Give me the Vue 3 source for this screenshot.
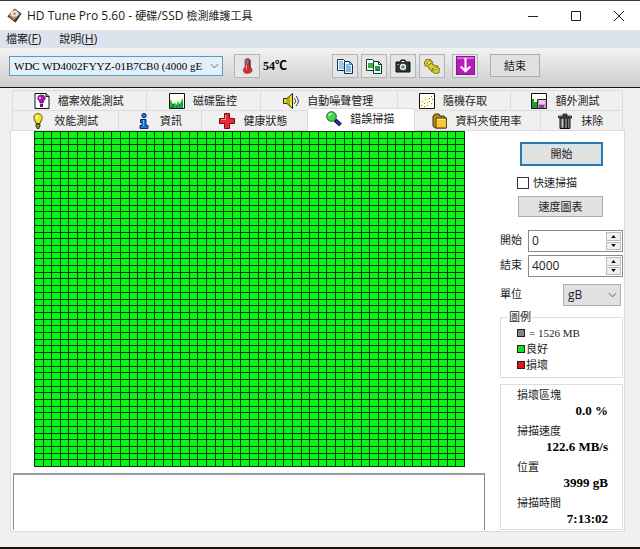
<script setup>
import { ref } from 'vue'

const COUNT = 50
const MAP_W = 430
const MAP_H = 335

function gridPath() {
  let d = ''
  for (let i = 0; i <= COUNT; i++) {
    const x = Math.round((i * MAP_W) / COUNT)
    const y = Math.round((i * MAP_H) / COUNT)
    d += `M${x} 0h1v${MAP_H + 1}h-1z`
    d += `M0 ${y}h${MAP_W + 1}v1h-${MAP_W + 1}z`
  }
  return d
}
const lines = gridPath()

const upperTabs = [
  { icon: 'file', label: '檔案效能測試', weight: 135 },
  { icon: 'monitor', label: '磁碟監控', weight: 114 },
  { icon: 'speaker', label: '自動噪聲管理', weight: 137 },
  { icon: 'random', label: '隨機存取', weight: 113 },
  { icon: 'extra', label: '額外測試', weight: 112 },
]
const lowerTabs = [
  { icon: 'bulb', label: '效能測試', weight: 106 },
  { icon: 'info', label: '資訊', weight: 83 },
  { icon: 'cross', label: '健康狀態', weight: 106 },
  { icon: 'lens', label: '錯誤掃描', weight: 108, active: true },
  { icon: 'folder', label: '資料夾使用率', weight: 126 },
  { icon: 'trash', label: '抹除', weight: 82 },
]
const tabRows = [upperTabs, lowerTabs]

const icons = {
  file: '<path d="M1 .5h11l3 3v12H1z" fill="#fff" stroke="#111"/><path d="M12 .5v3h3" fill="none" stroke="#111"/><path d="M7.500 2c-4.500 0-4.500 4.500-2 6l.5 2h3l.5-2c2.500-1.500 2.500-6-2-6z" fill="#b012b8" stroke="#50105a" stroke-width=".8"/><path d="M6 11h3v3H6z" fill="#701078"/><path d="M5 4h2v2H5z" fill="#f0a0f4"/>',
  monitor: '<path d="M.5.5h15v15H.5z" fill="#fffff0" stroke="#111"/><path d="M1 15V9l1-3 1 4 2 1 1-2 1 3 1-1 1-4 1 4 2-2 1-4 1 3v7z" fill="#18b828"/><path d="M3 15v-4h2v4zM7 15v-3h1v3zM10 15v-4h1v4zM13 15v-5h1v5z" fill="#1866a0"/>',
  speaker: '<path d="M.5 5.500H4L9.500.5v15L4 10.500H.5z" fill="#f0df25" stroke="#222"/><path d="M4 5v6M6 4v8" stroke="#8b7810"/><path d="M11 5c2 2 2 4 0 6M13 3c3 3 3 7 0 10" fill="none" stroke="#333"/>',
  random: '<path d="M.5.5h15v15H.5z" fill="#fffff0" stroke="#111"/><path d="M2 12h1v1H2zM3 8h1v1H3zM5 10h1v1H5zM6 6h1v1H6zM8 9h1v1H8zM8 12h1v1H8zM10 5h1v1h-1zM10 8h1v1h-1zM12 3h1v1h-1zM13 6h1v1h-1zM12 10h1v1h-1zM5 13h1v1H5z" fill="#a37b12"/>',
  extra: '<path d="M.5.5h15v15H.5z" fill="#fffff0" stroke="#111"/><path d="M1 6h2v3h3v6H1z" fill="#18a030"/><path d="M6.500 6.500h9v9h-9z" fill="#d98fca" stroke="#222"/><path d="M8 7h6v4H8z" fill="#e8c9e5"/><path d="M8 12h5v3H8z" fill="#814a7d"/>',
  bulb: '<path d="M8 .7C3.500.7 3 5 5 8l1 2.500h4L11 8C13 5 12.500.7 8 .7z" fill="#f3e526" stroke="#56500a"/><path d="M6 3h2v3H6z" fill="#fffcc0"/><path d="M6 11h4v2l-1 2.500H7L6 13z" fill="#92922c" stroke="#222" stroke-width=".8"/>',
  info: '<circle cx="8" cy="2.600" r="2.200" fill="#2675d3" stroke="#082b70"/><path d="M4.500 6.500h5.500v6h2v3H4v-3h2v-3H4.500z" fill="#2375d0" stroke="#082b70"/><path d="M7 7h1v6H7z" fill="#70b5ff"/>',
  cross: '<path d="M5.500.5h5v5h5v5h-5v5h-5v-5h-5v-5h5z" fill="#e52c30" stroke="#751014"/><path d="M6 2h1v5H2V6h4z" fill="#ff8c88"/>',
  lens: '<path d="M9 9l5.500 5" stroke="#101060" stroke-width="4"/><path d="M10 10l4 3.500" stroke="#2548c8" stroke-width="1.500"/><circle cx="5.500" cy="5.500" r="4.800" fill="#45d845" stroke="#145e24"/><path d="M3 5c0-2 2-3 3-2" fill="none" stroke="#caffc5" stroke-width="1.500"/>',
  folder: '<path d="M1 3l2-2h4l1 2h4l2 2v10H3l-2-2z" fill="#b88a16" stroke="#423108"/><path d="M4 5h10.500v10H4z" fill="#f4c832" stroke="#57410c"/><path d="M5 6h8v1H5z" fill="#fff08b"/>',
  trash: '<path d="M1.500 3h13v2h-13zM6 1h4v2H6z" fill="#777" stroke="#111" stroke-width=".8"/><path d="M3 5h10v10.500H3z" fill="#777" stroke="#111"/><path d="M5 6h1v8H5z" fill="#ccc"/><path d="M7.500 6v9M10.500 6v9" stroke="#222"/>',
  copy: '<path d="M.5 1.500h6l2 2v9h-8z" fill="#fff" stroke="#143656"/><path d="M2 4h4M2 6h5M2 8h5M2 10h5" stroke="#3b94d5"/><path d="M7.500 3.500h5l3 3v9h-8z" fill="#e9f7ff" stroke="#142d50"/><path d="M12.500 3.500v3h3M9 7h3M9 9h5M9 11h5M9 13h5" fill="none" stroke="#267bc4"/>',
  copyImage: '<path d="M.5 1.500h6l2 2v9h-8z" fill="#fff" stroke="#173f26"/><path d="M2 5h5v5H2z" fill="#36b638"/><path d="M7.500 3.500h5l3 3v9h-8z" fill="#f2fff2" stroke="#12312c"/><path d="M12.500 3.500v3h3" fill="none" stroke="#12312c"/><path d="M9 8h5v5H9z" fill="#28a92c"/><path d="M10 11h4v2h-4z" fill="#1769a0"/>',
  camera: '<path d="M5 4l1-2h4l1 2h4v10H1V4z" fill="#273535" stroke="#111" stroke-linejoin="round"/><path d="M6.500 3h3v1h-3z" fill="#eee"/><circle cx="8" cy="9" r="3.200" fill="#e8eeee"/><circle cx="8" cy="9" r="1.700" fill="#6b7b7b"/><path d="M2 6h2v1H2z" fill="#8c9d9d"/>',
  gears: '<path d="M1 3l2-2 1 1 2-1 1 2 2 1-1 2 1 1 2 0 1 1 2 0 0 2 2 1-1 2 0 2-2 0-2 1-1-2-2 0-1-2-2-1 0-2-2-1-2 0 0-2-1-1 1-1z" fill="#dccf36" stroke="#80750f"/><path d="M3 6c0-2 2-3 4-3M8 13c0-3 2-4 5-4M4 7l4-2M9 12l4-1" fill="none" stroke="#80750f"/><circle cx="5" cy="4.500" r="1" fill="#fff9a0"/><circle cx="11" cy="10.500" r="1" fill="#fff9a0"/>',
  thermo: '<path d="M6 2.500c0-3 5-3 5 0V9c2.500 3 1 6.500-3 6.500s-5-4-2-6.500z" fill="#d7292d" stroke="#8a6868"/><path d="M7 1.500h2V6H7z" fill="#5f8585"/><path d="M7 7h1v5H7z" fill="#ff8980"/><path d="M11 2v7c3 2 2 5 0 6" fill="none" stroke="#521a20"/>',
  save: '<path d="M0 0h18v18H0z" fill="#b61abd" stroke="#60106a"/><path d="M1 1h16v2H1z" fill="#da6bdd"/><path d="M9 2v12M4.500 10L9 14.500 13.500 10" fill="none" stroke="#fff" stroke-width="2"/>',
}

const tools = [
  { icon: 'copy', label: '複製文字' },
  { icon: 'copyImage', label: '複製圖片' },
  { icon: 'camera', label: '螢幕擷圖' },
  { icon: 'gears', label: '選項' },
]

const stats = [
  { label: '損壞區塊', value: '0.0 %' },
  { label: '掃描速度', value: '122.6 MB/s' },
  { label: '位置', value: '3999 gB' },
  { label: '掃描時間', value: '7:13:02' },
]

const range = ref([
  { id: 'range-start', label: '開始', value: 0 },
  { id: 'range-end', label: '結束', value: 4000 },
])
const quick = ref(false)
</script>

<template>
  <main class="window">
    <header class="titlebar">
      <svg class="app-icon" viewBox="0 0 16 16" aria-hidden="true">
        <path d="M1 9L8 1l7 5-6 9z" fill="#4e4036" stroke="#292420" />
        <path d="M2 8l6-7 6 5-6 6z" fill="#bda183" />
        <ellipse cx="8" cy="6" rx="4" ry="3" fill="#f0ded0" />
        <circle cx="8" cy="6" r="1" fill="#735442" />
        <path d="M2 10l6 3" stroke="#e58a3c" />
      </svg>
      <h1>HD Tune Pro 5.60 - <span>硬碟</span>/SSD <span>檢測維護工具</span></h1>
      <div class="window-controls">
        <button aria-label="最小化"><svg viewBox="0 0 12 12"><path d="M1 6.500h10" /></svg></button>
        <button aria-label="最大化"><svg viewBox="0 0 12 12"><path d="M1.500 1.500h9v9h-9z" /></svg></button>
        <button aria-label="關閉"><svg viewBox="0 0 12 12"><path d="M1 1l10 10M11 1L1 11" /></svg></button>
      </div>
    </header>

    <nav class="menubar">
      <a href="#file"><span>檔案</span>(<u>F</u>)</a>
      <a href="#help"><span>說明</span>(<u>H</u>)</a>
    </nav>

    <section class="toolbar">
      <div class="picker drive">
        <select aria-label="磁碟機">
          <option>WDC WD4002FYYZ-01B7CB0 (4000 gE</option>
        </select>
        <svg class="chevron" viewBox="0 0 10 6"><path d="M1 1l4 4 4-4" /></svg>
      </div>
      <button class="tool" aria-label="溫度"><svg viewBox="0 0 16 16" v-html="icons.thermo" /></button>
      <output class="temperature">54℃</output>
      <div class="tool-group">
        <button v-for="t in tools" :key="t.icon" class="tool" :aria-label="t.label">
          <svg viewBox="0 0 16 16" v-html="icons[t.icon]" />
        </button>
      </div>
      <button class="tool save" aria-label="儲存"><svg viewBox="0 0 18 18" v-html="icons.save" /></button>
      <button class="exit">結束</button>
    </section>

    <section class="content">
      <div class="tabs" role="tablist">
        <div v-for="(row, i) in tabRows" :key="i" class="tab-row">
          <button
            v-for="tab in row"
            :key="tab.label"
            class="tab"
            :class="{ active: tab.active }"
            :style="{ flexGrow: tab.weight }"
            role="tab"
            :aria-selected="!!tab.active"
          >
            <svg viewBox="0 0 16 16" v-html="icons[tab.icon]" />
            <span>{{ tab.label }}</span>
          </button>
        </div>
      </div>

      <div class="page">
        <div class="scan">
          <svg class="map" viewBox="0 0 431 336" shape-rendering="crispEdges" role="img">
            <rect width="431" height="336" fill="#0bf516" />
            <path :d="lines" fill="#033806" />
          </svg>
          <div class="log"></div>
        </div>

        <aside class="side">
          <button class="start">開始</button>
          <label class="check"><input v-model="quick" type="checkbox" /><span>快速掃描</span></label>
          <button class="chart">速度圖表</button>

          <div v-for="r in range" :key="r.id" class="field">
            <label :for="r.id">{{ r.label }}</label>
            <div class="spin">
              <input :id="r.id" v-model.number="r.value" type="text" />
              <div class="arrows">
                <button aria-label="增加" @click="r.value++"><svg viewBox="0 0 6 4"><path d="M0 4l3-4 3 4z" /></svg></button>
                <button aria-label="減少" @click="r.value--"><svg viewBox="0 0 6 4"><path d="M0 0h6L3 4z" /></svg></button>
              </div>
            </div>
          </div>
          <div class="field unit">
            <label for="unit">單位</label>
            <div class="picker">
              <select id="unit"><option>gB</option></select>
              <svg class="chevron" viewBox="0 0 10 6"><path d="M1 1l4 4 4-4" /></svg>
            </div>
          </div>

          <fieldset class="legend">
            <legend>圖例</legend>
            <p class="block"><i class="swatch grey"></i><span>= 1526 MB</span></p>
            <p><i class="swatch green"></i><span>良好</span></p>
            <p><i class="swatch red"></i><span>損壞</span></p>
          </fieldset>

          <dl class="stats">
            <div v-for="s in stats" :key="s.label">
              <dt>{{ s.label }}</dt>
              <dd>{{ s.value }}</dd>
            </div>
          </dl>
        </aside>
      </div>
    </section>
  </main>
</template>

<style>
body {
  background: #f0f0f0;
}
</style>

<style scoped>
* {
  box-sizing: border-box;
}
.window {
  display: flex;
  flex-direction: column;
  min-height: 100vh;
  border-top: 1px solid #3a3638;
  border-bottom: 2px solid #17100f;
  background: #f0f0f0;
  color: #1c1c1c;
  font: 11px/16px "Open Sans", "Noto Sans CJK TC", sans-serif;
}
button,
input,
select {
  margin: 0;
  padding: 0;
  border-radius: 0;
  color: inherit;
  font: inherit;
}
svg {
  display: block;
}
.titlebar {
  display: flex;
  align-items: center;
  height: 29px;
  padding-left: 7px;
  background: #fff;
}
.app-icon {
  width: 15px;
  height: 15px;
}
h1 {
  flex: 1;
  margin: 0 0 0 5px;
  font-size: 12px;
  font-weight: 400;
  white-space: nowrap;
}
h1 span,
.menubar span {
  font-size: 11px;
}
.window-controls {
  display: flex;
}
.window-controls button {
  display: grid;
  place-items: center;
  width: 43px;
  height: 28px;
  border: 0;
  background: none;
}
.window-controls svg {
  width: 12px;
  height: 12px;
  fill: none;
  stroke: #222;
}
.menubar {
  display: flex;
  gap: 18px;
  height: 18px;
  padding: 0 6px;
  background: #dce3ed;
  font-size: 12px;
  line-height: 18px;
}
.menubar a {
  color: inherit;
  text-decoration: none;
}
.toolbar {
  display: flex;
  align-items: center;
  height: 40px;
  padding: 0 9px 4px;
  border-bottom: 1px solid #151515;
  background: linear-gradient(#f2f2f2, #cecece);
}
.picker {
  position: relative;
}
.picker select {
  width: 100%;
  height: 22px;
  padding: 0 18px 0 4px;
  border: 1px solid #adadad;
  background: #e1e1e1;
  font-size: 12px;
  appearance: none;
}
.drive {
  width: 214px;
}
.drive select {
  height: 20px;
  padding-right: 12px;
  border: 1px solid #5a9bc4;
  background: #e3f0fa;
  color: #000;
  font-family: "Liberation Serif", serif;
  font-size: 11px;
}
.chevron {
  position: absolute;
  top: 50%;
  right: 4px;
  width: 9px;
  height: 6px;
  margin-top: -3px;
  fill: none;
  stroke: #555;
  pointer-events: none;
}
.tool {
  display: grid;
  place-items: center;
  width: 26px;
  height: 24px;
  border: 1px solid #b4b4b4;
  background: #e6e6e6;
}
.tool svg {
  width: 16px;
  height: 16px;
}
.drive + .tool {
  margin-left: 11px;
}
.temperature {
  width: 69px;
  margin-left: 3px;
  color: #000;
  font: bold 12px/16px "Liberation Serif", "Noto Sans CJK TC", serif;
}
.tool-group {
  display: flex;
  gap: 3px;
}
.save {
  margin-left: 7px;
}
.save svg {
  width: 19px;
  height: 19px;
}
.exit {
  width: 50px;
  height: 23px;
  margin-left: 12px;
  border: 1px solid #adadad;
  background: #e1e1e1;
}
.content {
  display: flex;
  flex: 1;
  flex-direction: column;
  padding: 2px 15px 15px 10px;
}
.tabs {
  padding: 0 2px;
}
.tab-row {
  display: flex;
  height: 20px;
  border-left: 1px solid #dcdcdc;
}
.tab {
  display: flex;
  flex: 0 0 0;
  align-items: center;
  justify-content: center;
  gap: 8px;
  height: 20px;
  padding-right: 2px;
  border: 0;
  border-top: 1px solid #dcdcdc;
  border-right: 1px solid #dcdcdc;
  background: #f0f0f0;
  color: #222;
  white-space: nowrap;
}
.tab svg {
  flex: none;
  width: 16px;
  height: 16px;
}
.tab.active {
  z-index: 1;
  height: 23px;
  margin-top: -2px;
  padding-bottom: 2px;
  background: #fff;
}
.page {
  display: flex;
  flex: 1;
  gap: 15px;
  border: 1px solid #dcdcdc;
  background: #fff;
}
.scan {
  display: flex;
  flex: 1;
  flex-direction: column;
  padding-left: 2px;
}
.map {
  width: auto;
  margin: 0 20px 0 21px;
}
.log {
  flex: 1;
  min-height: 56px;
  margin: 6px 0 1px;
  border: 1px solid #888;
  border-top: 2px solid #999;
  border-bottom: 0;
}
.side {
  display: flex;
  flex: none;
  flex-direction: column;
  width: 124px;
  padding: 11px 1px 1px 0;
}
.start {
  width: 83px;
  height: 24px;
  margin-left: 20px;
  border: 2px solid #287ba8;
  background: #e1e1e1;
  box-shadow: inset 0 0 0 1px #bfe8fb;
}
.check {
  display: flex;
  align-items: center;
  gap: 4px;
  height: 16px;
  margin: 9px 0 5px 17px;
}
.check input {
  width: 12px;
  height: 12px;
  border: 1px solid #333;
  background: #fff;
  appearance: none;
}
.check input:checked {
  background: #287ba8;
}
.chart {
  width: 85px;
  height: 21px;
  margin: 0 0 13px 18px;
  border: 1px solid #adadad;
  background: #e1e1e1;
}
.field {
  display: flex;
  justify-content: space-between;
  margin-bottom: 3px;
}
.field label {
  padding-top: 2px;
}
.spin {
  display: flex;
  width: 95px;
  height: 22px;
  padding: 1px;
  border: 1px solid #8a8a8a;
}
.spin input {
  flex: 1;
  min-width: 0;
  padding-left: 2px;
  border: 0;
  background: none;
  font-size: 12px;
}
.arrows {
  display: flex;
  flex-direction: column;
  gap: 1px;
  width: 15px;
}
.arrows button {
  display: grid;
  flex: 1;
  place-items: center;
  border: 1px solid #bbb;
  background: #f0f0f0;
}
.arrows svg {
  width: 5px;
  height: 3px;
}
.unit {
  margin: 4px 2px 3px 0;
}
.unit .picker {
  width: 58px;
}
.legend {
  min-width: 0;
  margin: 0 0 6px;
  padding: 0 0 4px 16px;
  border: 1px solid #dcdcdc;
}
.legend legend {
  margin-left: -9px;
  padding: 0 1px;
}
.legend p {
  display: flex;
  align-items: center;
  gap: 1px;
  margin: 0;
  font-size: 11px;
  line-height: 16px;
}
.legend .block {
  gap: 4px;
  font-family: "Liberation Serif", serif;
}
.swatch {
  width: 8px;
  height: 8px;
  border: 1px solid #222;
}
.grey {
  background: #858585;
}
.green {
  background: #13e31b;
}
.red {
  background: #e2141c;
}
.stats {
  display: flex;
  flex: 1;
  flex-direction: column;
  gap: 4px;
  margin: 0;
  padding: 2px 14px 0 16px;
  border: 1px solid #dcdcdc;
}
.stats dt {
  line-height: 16px;
}
.stats dd {
  margin: 0;
  color: #000;
  font: bold 13px/16px "Liberation Serif", serif;
  text-align: right;
}
</style>
